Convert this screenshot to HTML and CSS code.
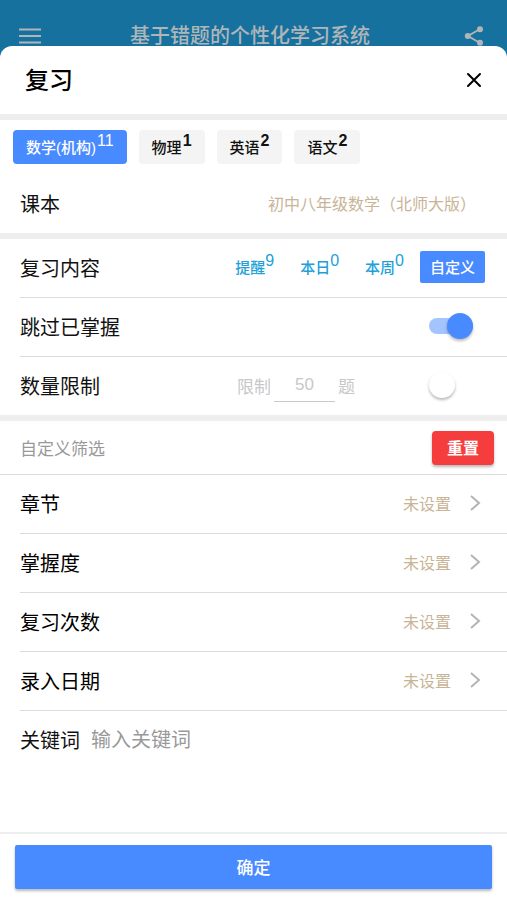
FILE: index.html
```html
<!DOCTYPE html>
<html lang="zh-CN">
<head>
<meta charset="utf-8">
<meta name="viewport" content="width=device-width, initial-scale=1">
<title>复习</title>
<link rel="stylesheet" href="styles.css">
</head>
<body>
<header class="app-bar">
  <button class="icon-button" type="button" aria-label="菜单">
    <svg width="24" height="18" viewBox="0 0 24 18"><path d="M1 2.5h22M1 9h22M1 15.5h22" stroke="currentColor" stroke-width="2.2"/></svg>
  </button>
  <h1 class="app-title">基于错题的个性化学习系统</h1>
  <button class="icon-button" type="button" aria-label="分享">
    <svg width="20" height="20" viewBox="0 0 20 20"><path d="M16 3 4 10l12 7" fill="none" stroke="currentColor" stroke-width="1.8"/><g fill="currentColor"><circle cx="16" cy="3.2" r="3"/><circle cx="3.8" cy="10" r="3"/><circle cx="16" cy="16.8" r="3"/></g></svg>
  </button>
</header>

<main class="sheet">
  <div class="sheet-head">
    <h2 class="sheet-title">复习</h2>
    <button class="icon-button close" type="button" aria-label="关闭">
      <svg width="16" height="16" viewBox="0 0 16 16"><path d="M2 2l12 12M14 2 2 14" stroke="currentColor" stroke-width="2" stroke-linecap="round"/></svg>
    </button>
  </div>

  <section class="band">
    <nav class="tabs" aria-label="科目">
      <button class="tab active" type="button">数学(机构)<sup>11</sup></button>
      <button class="tab" type="button">物理<sup>1</sup></button>
      <button class="tab" type="button">英语<sup>2</sup></button>
      <button class="tab" type="button">语文<sup>2</sup></button>
    </nav>
    <div class="row textbook">
      <span class="label">课本</span>
      <span class="value">初中八年级数学（北师大版）</span>
    </div>
  </section>

  <section class="band">
    <div class="row ruled">
      <span class="label">复习内容</span>
      <div class="scopes">
        <button class="scope" type="button">提醒<sup>9</sup></button>
        <button class="scope" type="button">本日<sup>0</sup></button>
        <button class="scope" type="button">本周<sup>0</sup></button>
        <button class="scope active" type="button">自定义</button>
      </div>
    </div>
    <div class="row ruled">
      <label class="label" for="skip">跳过已掌握</label>
      <input class="switch" type="checkbox" id="skip" checked>
    </div>
    <div class="row">
      <label class="label" for="limit-on">数量限制</label>
      <div class="limit">
        <label for="limit">限制</label>
        <input class="limit-input" type="text" id="limit" value="50" disabled>
        <span>题</span>
      </div>
      <input class="switch" type="checkbox" id="limit-on">
    </div>
  </section>

  <section class="band">
    <div class="filter-head">
      <h3 class="filter-title">自定义筛选</h3>
      <button class="reset" type="button">重置</button>
    </div>
    <button class="row ruled link-row" type="button">
      <span class="label">章节</span><span class="value">未设置</span>
      <svg class="chevron" width="12" height="18" viewBox="0 0 12 18"><path d="M2 2l8 7-8 7" fill="none" stroke="currentColor" stroke-width="2"/></svg>
    </button>
    <button class="row ruled link-row" type="button">
      <span class="label">掌握度</span><span class="value">未设置</span>
      <svg class="chevron" width="12" height="18" viewBox="0 0 12 18"><path d="M2 2l8 7-8 7" fill="none" stroke="currentColor" stroke-width="2"/></svg>
    </button>
    <button class="row ruled link-row" type="button">
      <span class="label">复习次数</span><span class="value">未设置</span>
      <svg class="chevron" width="12" height="18" viewBox="0 0 12 18"><path d="M2 2l8 7-8 7" fill="none" stroke="currentColor" stroke-width="2"/></svg>
    </button>
    <button class="row ruled link-row" type="button">
      <span class="label">录入日期</span><span class="value">未设置</span>
      <svg class="chevron" width="12" height="18" viewBox="0 0 12 18"><path d="M2 2l8 7-8 7" fill="none" stroke="currentColor" stroke-width="2"/></svg>
    </button>
    <div class="row keyword-row">
      <label class="label" for="keyword">关键词</label>
      <input class="keyword" type="text" id="keyword" placeholder="输入关键词">
    </div>
  </section>

  <footer class="footer">
    <button class="confirm" type="button">确定</button>
  </footer>
</main>
</body>
</html>
```
FILE: styles.css
```css
* { box-sizing: border-box; }

body {
  margin: 0;
  min-height: 100vh;
  display: flex;
  flex-direction: column;
  background: #17719f;
  color: #111;
  font-family: "Liberation Sans", "Noto Sans CJK SC", sans-serif;
}

button, input { font: inherit; color: inherit; }
button { border: 0; padding: 0; background: none; cursor: pointer; }
h1, h2, h3 { margin: 0; font-weight: 400; }

.app-bar {
  height: 46px;
  padding: 25px 23px 0 18px;
  display: flex;
  align-items: center;
  color: #b0b5b8;
}
.app-title {
  flex: 1;
  margin-right: 6px;
  font-size: 20px;
  line-height: 20px;
  font-weight: 500;
  text-align: center;
  white-space: nowrap;
}
.icon-button { display: flex; }

.sheet {
  flex: 1;
  display: flex;
  flex-direction: column;
  background: #fff;
  border-radius: 12px 12px 0 0;
}
.sheet-head {
  height: 68px;
  padding: 0 25px;
  display: flex;
  align-items: center;
  justify-content: space-between;
}
.sheet-title { padding-bottom: 3px; font-size: 24px; font-weight: 500; color: #000; }
.close { color: #000; }

.band { border-top: 6px solid #eee; }

.tabs { display: flex; gap: 12px; padding: 10px 13px 11px; }
.tab {
  height: 34px;
  padding: 0 13px 2px;
  border-radius: 4px;
  background: #f4f4f4;
  font-size: 15px;
  font-weight: 500;
}
.tab.active { background: #488aff; color: #fff; }
sup {
  font-size: 16px;
  line-height: 0;
  vertical-align: 7px;
}
.tab sup { margin-left: 1px; font-weight: 700; }
.tab.active sup { font-weight: 500; }

.row {
  height: 58px;
  margin-left: 20px;
  padding: 0 22px 2px 0;
  display: flex;
  align-items: center;
}
.ruled { height: 59px; border-bottom: 1px solid #dcdcdc; }
.label { margin-right: auto; font-size: 20px; }
.value { font-size: 16px; color: #c8b496; }
.textbook { padding-right: 31px; }

.scopes { display: flex; gap: 6px; }
.scope {
  height: 32px;
  padding: 0 10px 2px;
  border-radius: 2px;
  font-size: 15px;
  font-weight: 500;
  color: #229fd9;
}
.scope.active { background: #488aff; color: #fff; }

.switch {
  appearance: none;
  width: 44px;
  height: 26px;
  margin: 0 12px 0 0;
  display: flex;
  align-items: center;
}
.switch::before {
  content: "";
  width: 26px;
  height: 26px;
  border-radius: 50%;
  background: #fff;
  box-shadow: 0 2px 3px rgba(0, 0, 0, 0.28);
}
.switch:checked {
  justify-content: flex-end;
  height: 16px;
  border-radius: 8px;
  background: #a4c4ff;
}
.switch:checked::before { background: #488aff; }

.limit {
  margin-right: 74px;
  display: flex;
  align-items: center;
  gap: 3px;
  font-size: 17px;
  color: #c8c8c8;
}
.limit-input {
  width: 61px;
  height: 34px;
  padding: 0;
  border: 0;
  border-bottom: 1px solid #c8c8c8;
  background: none;
  text-align: center;
}

.filter-head {
  height: 54px;
  padding: 0 13px 0 20px;
  display: flex;
  align-items: center;
  justify-content: space-between;
  border-bottom: 1px solid #dcdcdc;
}
.filter-title { font-size: 17px; color: #999; }
.reset {
  width: 62px;
  height: 34px;
  padding-bottom: 2px;
  border-radius: 4px;
  background: #f53d3d;
  box-shadow: 0 2px 3px rgba(0, 0, 0, 0.28);
  color: #fff;
  font-size: 16px;
  font-weight: 700;
}

.link-row { width: calc(100% - 20px); padding-right: 26px; }
.link-row .label { color: #000; }
.chevron { margin-left: 18px; color: #b4b4b4; }

.keyword-row .label { margin-right: 11px; }
.keyword {
  flex: 1;
  min-width: 0;
  padding: 3px 0 0;
  border: 0;
  outline: 0;
  background: none;
  font-size: 20px;
}
.keyword::placeholder { color: #999; }

.footer {
  margin-top: auto;
  padding: 11px 15px;
  border-top: 2px solid #eee;
}
.confirm {
  display: block;
  width: 100%;
  height: 44px;
  padding-bottom: 2px;
  border-radius: 2px;
  background: #488aff;
  box-shadow: 0 2px 3px rgba(0, 0, 0, 0.28);
  color: #fff;
  font-size: 17px;
  font-weight: 500;
}
```
